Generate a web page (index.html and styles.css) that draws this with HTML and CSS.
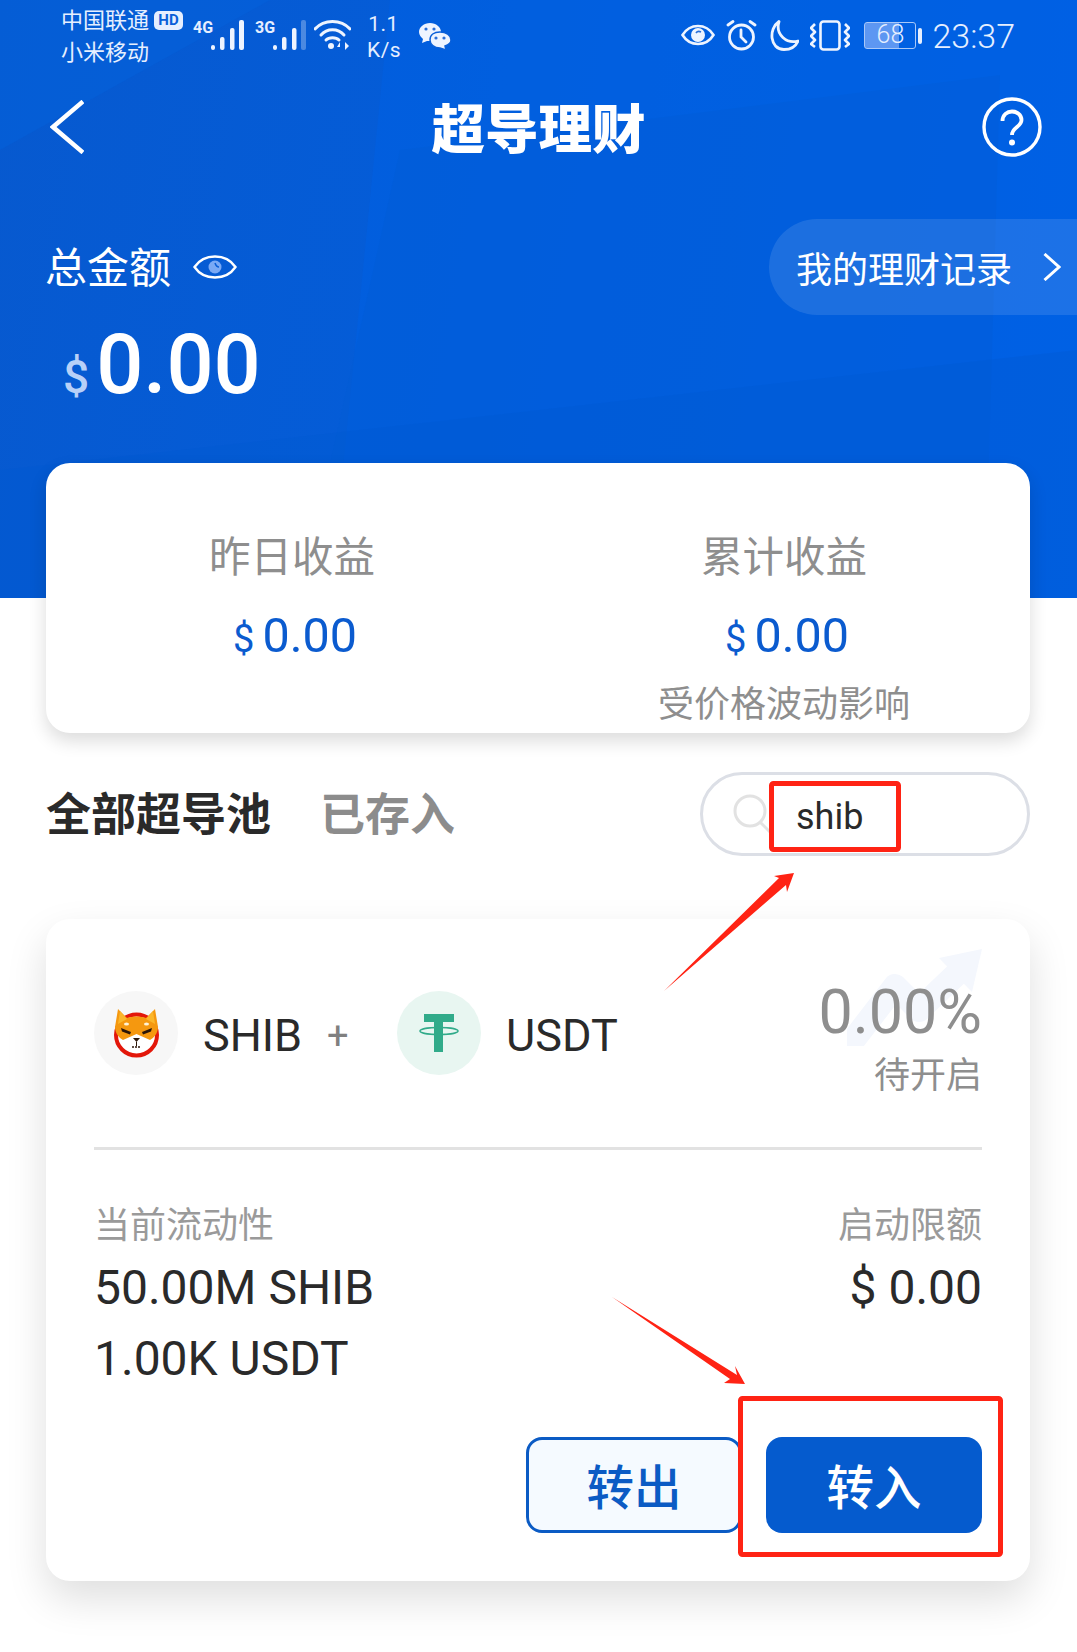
FILE: index.html
```html
<!DOCTYPE html>
<html lang="zh-CN">
    <head>
        <meta charset="UTF-8">
        <meta name="viewport" content="width=device-width, initial-scale=1.0">
        <title>超导理财</title>

        <link rel="stylesheet" href="styles.css">
    </head>
    <body>
        <div class="page">

            <div class="hero">
                <svg class="hero-bg" width="1077" height="598" viewBox="0 0 1077 598">
                    <polygon points="0,150 270,0 0,0" fill="#0461dc" opacity=".5"/>
                    <polygon points="390,0 1077,0 1077,598 330,598" fill="#0061e4" opacity=".55"/>
                    <polygon points="400,150 1000,75 985,598 300,598" fill="#045bd4" opacity=".35"/>
                    <polygon points="0,470 1077,350 1077,598 0,598" fill="#0058d0" opacity=".35"/>
                </svg>

                <!-- barra de status -->
                <div class="status">
                    <div class="status-left">
                        <div class="carrier">
                            <div>中国联通<span class="hd">HD</span></div>
                            <div>小米移动</div>
                        </div>
                        <div class="signal">
                            <span class="net">4G</span>
                            <svg width="33" height="30" viewBox="0 0 33 30" fill="#eef4ff">
                                <rect x="0" y="25" width="4" height="5" rx="2"/>
                                <rect x="9" y="17" width="4.500" height="13" rx="2"/>
                                <rect x="19" y="8" width="4.500" height="22" rx="2"/>
                                <rect x="28" y="0" width="5" height="30" rx="2"/>
                            </svg>
                        </div>
                        <div class="signal signal-3g">
                            <span class="net">3G</span>
                            <svg width="33" height="30" viewBox="0 0 33 30" fill="#eef4ff">
                                <rect x="0" y="25" width="4" height="5" rx="2"/>
                                <rect x="9" y="17" width="4.500" height="13" rx="2"/>
                                <rect x="19" y="8" width="4.500" height="22" rx="2"/>
                                <rect x="28" y="0" width="5" height="30" rx="2" opacity=".3"/>
                            </svg>
                        </div>
                        <svg class="wifi" width="37" height="30" viewBox="0 0 37 30" fill="none" stroke="#eef4ff" stroke-width="3" stroke-linecap="round">
                            <path d="M1 9C10 -1 27 -1 36 9"/>
                            <path d="M7 15C13 8 24 8 30 15"/>
                            <path d="M12 20C15 17 22 17 25 20"/>
                            <circle cx="17" cy="26" r="3" fill="#eef4ff" stroke="none"/>
                            <path d="M26 22L23 27H26V22ZM31 22V30L35 26Z" fill="#eef4ff" stroke="none"/>
                        </svg>
                        <div class="speed">
                            <div>1.1</div>
                            <div>K/s</div>
                        </div>
                        <svg class="wechat" width="32" height="27" viewBox="0 0 32 27">
                            <path d="M11 0C5 0 0 4 0 9C0 12 2 14 4 16L3 20L8 18C9 18 10 18 12 18C17 18 22 14 22 9C22 4 17 0 11 0Z" fill="#eef4ff"/>
                            <path d="M21 9C15 9 11 12 11 17C11 21 15 25 21 25L27 27L26 23C29 22 32 20 32 17C32 12 27 9 21 9Z" fill="#eef4ff" stroke="#0a5fd8" stroke-width="1.5"/>
                            <circle cx="7" cy="6" r="1.6" fill="#2a6fd8"/>
                            <circle cx="15" cy="6" r="1.6" fill="#2a6fd8"/>
                            <circle cx="17" cy="15" r="1.6" fill="#2a6fd8"/>
                            <circle cx="25" cy="15" r="1.6" fill="#2a6fd8"/>
                        </svg>
                    </div>
                    <div class="status-right">
                        <svg width="34" height="26" viewBox="0 0 34 26" fill="none" stroke="#eef4ff" stroke-width="2.6">
                            <path d="M1.5 13C9 1 25 1 32.5 13C25 25 9 25 1.5 13Z"/>
                            <circle cx="17" cy="13" r="7" fill="#eef4ff" stroke="none"/>
                            <path d="M15 11C16 9.500 18 9 20 10" stroke="#2a6fd8" stroke-width="1.6"/>
                        </svg>
                        <svg width="31" height="31" viewBox="0 0 31 31" fill="none" stroke="#eef4ff" stroke-width="2.8" stroke-linecap="round">
                            <circle cx="15.500" cy="17" r="12"/>
                            <path d="M15 10V17L20 22"/>
                            <path d="M2 5L7 1.500M29 5L24 1.500"/>
                        </svg>
                        <svg width="31" height="31" viewBox="0 0 31 31" fill="none" stroke="#eef4ff" stroke-width="2.8" stroke-linejoin="round">
                            <path d="M11 1.500C0 9 2 29.500 16 29.500C23 29.500 28 26 30 21C19 24 7 15 11 1.500Z"/>
                        </svg>
                        <svg width="40" height="31" viewBox="0 0 40 31" fill="none" stroke="#eef4ff" stroke-width="2.6" stroke-linejoin="round">
                            <rect x="10.500" y="1.500" width="19" height="28" rx="3"/>
                            <path d="M5 4L1 8L5 12L1 16L5 20L1 24L5 27"/>
                            <path d="M35 4L39 8L35 12L39 16L35 20L39 24L35 27"/>
                        </svg>
                        <div class="battery">
                            <div class="battery-body">68</div>
                            <div class="battery-nub"></div>
                        </div>
                        <div class="clock">23:37</div>
                    </div>
                </div>

                <div class="nav">
                    <svg class="back" width="34" height="54" viewBox="0 0 34 54" fill="none" stroke="#fff" stroke-width="4.500">
                        <path d="M33 1.500L3 27L33 52.500"/>
                    </svg>
                    <h1 class="title">超导理财</h1>
                    <svg class="help" width="60" height="60" viewBox="0 0 60 60" fill="none" stroke="#fff" stroke-width="3.400">
                        <circle cx="30" cy="30" r="28"/>
                        <path d="M20.500 24C20.500 11 39.500 12 39.500 23C39.500 30 30 30 30 38" stroke-width="3.800"/>
                        <circle cx="30" cy="45.500" r="3" fill="#fff" stroke="none"/>
                    </svg>
                </div>

                <div class="total-row">
                    <div class="total-label">
                        <span>总金额</span>
                        <svg width="44" height="26" viewBox="0 0 44 26" fill="none" stroke="#fff" stroke-width="2.400">
                            <path d="M1.500 13C11 -1 33 -1 42.500 13C33 27 11 27 1.500 13Z"/>
                            <circle cx="22" cy="13" r="6.500" fill="#7aa9f5" stroke="none"/>
                            <path d="M22 9C23 12 24 13 26 13" stroke="#0a5fd8" stroke-width="1.500"/>
                        </svg>
                    </div>
                    <div class="records">
                        <span>我的理财记录</span>
                        <svg width="18" height="28" viewBox="0 0 18 28" fill="none" stroke="#fff" stroke-width="3">
                            <path d="M1.500 1L16 14L1.500 27"/>
                        </svg>
                    </div>
                </div>

                <div class="total-amount"><span class="cur">$</span><span class="num">0.00</span></div>
            </div>

            <div class="summary">
                <div class="summary-col">
                    <div class="summary-label">昨日收益</div>
                    <div class="summary-value"><span class="cur">$</span>0.00</div>
                </div>
                <div class="summary-col">
                    <div class="summary-label">累计收益</div>
                    <div class="summary-value"><span class="cur">$</span>0.00</div>
                    <div class="summary-note">受价格波动影响</div>
                </div>
            </div>

            <div class="tabs">
                <div class="tab tab-active">全部超导池</div>
                <div class="tab">已存入</div>
                <div class="search">
                    <svg width="40" height="46" viewBox="0 0 40 46" fill="none" stroke="#e2e2e2" stroke-width="3">
                        <circle cx="17" cy="17" r="15"/>
                        <path d="M27 28L38 39"/>
                    </svg>
                    <span class="search-text">shib</span>
                </div>
            </div>

            <div class="pool">
                <svg class="pool-arrow" width="136" height="98" viewBox="0 0 136 98">
                    <path d="M8 90L48 38L72 62L118 18" fill="none" stroke="#f4f7fd" stroke-width="24" stroke-linecap="round" stroke-linejoin="round"/>
                    <path d="M92 10L135 1L125 44Z" fill="#f4f7fd"/>
                </svg>

                <div class="pool-top">
                    <div class="pair">
                        <div class="coin coin-shib">
                            <svg width="84" height="84" viewBox="0 0 84 84">
                                <circle cx="42.500" cy="44" r="20.500" fill="#fff" stroke="#e3170a" stroke-width="4"/>
                                <path d="M24 18L33 27C38 25 47 25 52 27L61 18L64 36C64 42 60 47 56 49L42.500 43L29 49C25 47 21 42 21 36Z" fill="#f5980f"/>
                                <path d="M26 20L33 28L24 33ZM59 20L52 28L61 33Z" fill="#fbb62a"/>
                                <ellipse cx="32.500" cy="33" rx="2.500" ry="1.500" fill="#fff3d6"/>
                                <ellipse cx="52.500" cy="33" rx="2.500" ry="1.500" fill="#fff3d6"/>
                                <path d="M27 37L37 41L36 43.500L28 40.500ZM58 37L48 41L49 43.500L57 40.500Z" fill="#2b1608"/>
                                <path d="M39 47H46L42.500 51Z" fill="#2b1608"/>
                                <path d="M38 56H47" stroke="#2b1608" stroke-width="1.500" stroke-dasharray="2 1"/>
                                <path d="M42.500 51V55" stroke="#2b1608" stroke-width="1"/>
                            </svg>
                        </div>
                        <span class="coin-name">SHIB</span>
                        <span class="plus">+</span>
                        <div class="coin coin-usdt">
                            <svg width="84" height="84" viewBox="0 0 84 84" fill="#31ab8a">
                                <rect x="27" y="23" width="30" height="8"/>
                                <rect x="37" y="23" width="9" height="38"/>
                                <ellipse cx="42" cy="40" rx="19" ry="3.500" fill="none" stroke="#31ab8a" stroke-width="1.500"/>
                            </svg>
                        </div>
                        <span class="coin-name">USDT</span>
                    </div>
                    <div class="rate">
                        <div class="rate-value">0.00%</div>
                        <div class="rate-note">待开启</div>
                    </div>
                </div>

                <div class="divider"></div>

                <div class="stats">
                    <div>
                        <div class="stat-label">当前流动性</div>
                        <div class="stat-value">50.00M SHIB</div>
                        <div class="stat-value">1.00K USDT</div>
                    </div>
                    <div class="stat-right">
                        <div class="stat-label">启动限额</div>
                        <div class="stat-value">$ 0.00</div>
                    </div>
                </div>

                <div class="actions">
                    <div class="btn btn-out">转出</div>
                    <div class="btn btn-in">转入</div>
                </div>
            </div>

            <!-- marcacoes em vermelho por cima da tela -->
            <svg class="marks" width="1077" height="1652" viewBox="0 0 1077 1652">
                <rect x="771.500" y="783.500" width="127" height="66" rx="2" fill="none" stroke="#ff2314" stroke-width="5"/>
                <rect x="740.500" y="1398.500" width="260" height="156" rx="2" fill="none" stroke="#ff2314" stroke-width="5"/>
                <polygon points="664,991 779,878 774,876 794,873 787,892 786,885" fill="#ff2314"/>
                <polygon points="612,1297 737,1375 735,1366 745,1384 724,1383 730,1379" fill="#ff2314"/>
            </svg>

        </div>
    </body>
</html>
```

FILE: styles.css
```css
*{
    box-sizing: border-box;
}
body{
    margin: 0;
    background-color: #fff;
    font-family: Roboto, "Noto Sans CJK SC", sans-serif;
}
.page{
    position: relative;
    width: 1077px;
    height: 1652px;
    overflow: hidden;
    background-color: #fff;
}
.hero{
    position: relative;
    height: 598px;
    overflow: hidden;
    color: #fff;
    background: linear-gradient(100deg, #0759cf, #0062e6);
}
.hero-bg{
    position: absolute;
    left: 0;
    top: 0;
}
.status, .nav, .total-row, .total-amount{
    position: relative;
}

/* status */
.status{
    display: flex;
    justify-content: space-between;
    height: 74px;
    padding: 0 62px 0 61px;
    color: #e6efff;
}
.status-left{
    display: flex;
    align-items: flex-start;
}
.carrier{
    width: 122px;
    padding-top: 5px;
    font-size: 22px;
    line-height: 32px;
}
.hd{
    display: inline-block;
    vertical-align: 3px;
    width: 29px;
    height: 19px;
    margin-left: 5px;
    border-radius: 5px;
    background-color: #e6efff;
    color: #0a5fd8;
    font-size: 15px;
    font-weight: 700;
    line-height: 19px;
    text-align: center;
}
.signal{
    display: flex;
    align-items: flex-start;
    margin: 20px 0 0 10px;
}
.signal-3g{
    margin-left: 11px;
}
.net{
    width: 18px;
    font-family: "Liberation Sans Narrow", Roboto, sans-serif;
    font-size: 16px;
    font-weight: 700;
    line-height: 16px;
}
.wifi{
    margin: 20px 0 0 8px;
}
.speed{
    width: 33px;
    margin: 11px 0 0 16px;
    font-size: 21px;
    line-height: 26px;
    text-align: center;
    letter-spacing: 0.500px;
}
.wechat{
    margin: 23px 0 0 19px;
}
.status-right{
    display: flex;
    align-items: flex-start;
    gap: 11px;
    padding-top: 20px;
}
.status-right svg:first-child{
    margin-top: 2px;
}
.battery{
    display: flex;
    align-items: center;
    gap: 2px;
    margin: 2px 0 0 3px;
}
.battery-body{
    width: 52px;
    height: 27px;
    border: 1.500px solid #a9c8f8;
    border-radius: 3px;
    background: linear-gradient(90deg, #5d97f2 68%, transparent 68%);
    font-size: 25px;
    font-weight: 300;
    line-height: 24px;
    text-align: center;
}
.battery-nub{
    width: 4px;
    height: 16px;
    border-radius: 2px;
    background-color: #e6efff;
}
.clock{
    margin-left: -1px;
    font-size: 34px;
    font-weight: 300;
    line-height: 32px;
}

/* nav */
.nav{
    display: grid;
    grid-template-columns: 1fr auto 1fr;
    align-items: center;
    height: 106px;
    padding: 0 35px;
}
.back{
    margin-left: 15px;
}
.title{
    margin: 0;
    padding-top: 8px;
    font-size: 53.500px;
    font-weight: 900;
    line-height: 98px;
}
.help{
    justify-self: end;
}

/* total */
.total-row{
    display: flex;
    justify-content: space-between;
    align-items: center;
    height: 96px;
    margin-top: 39px;
    padding-left: 45px;
}
.total-label{
    display: flex;
    align-items: center;
    gap: 22px;
    font-size: 42px;
    line-height: 92px;
}
.total-label span{
    padding-top: 4px;
}
.records{
    display: flex;
    align-items: center;
    width: 308px;
    height: 96px;
    padding-left: 27px;
    border-radius: 48px 0 0 48px;
    background-color: rgba(255, 255, 255, .11);
    font-size: 36px;
}
.records svg{
    margin-left: 31px;
}
.total-amount{
    display: flex;
    align-items: baseline;
    padding-left: 63px;
}
.total-amount .cur{
    color: #b8d0f8;
    font-size: 46px;
    font-weight: 500;
    margin-right: 7px;
}
.num{
    font-size: 83px;
    font-weight: 500;
    line-height: 100px;
}

/* cards */
.summary, .pool{
    position: relative;
    margin: 0 47px 0 46px;
    border-radius: 24px;
    background-color: #fff;
}
.summary{
    display: grid;
    grid-template-columns: 1fr 1fr;
    height: 270px;
    margin-top: -135px;
    padding-top: 67px;
    box-shadow: 0 8px 18px rgba(0, 0, 0, .14);
    text-align: center;
}
.summary-label{
    color: #8e8e8e;
    font-size: 41.500px;
    line-height: 56px;
}
.summary-value{
    margin-top: 20px;
    padding-left: 6px;
    color: #0b5bcf;
    font-size: 48.500px;
    line-height: 60px;
}
.summary-value .cur{
    margin-right: 8px;
    font-size: 38px;
}
.summary-note{
    margin-top: 14px;
    color: #8e8e8e;
    font-size: 36px;
    line-height: 44px;
}

/* tabs */
.tabs{
    display: flex;
    align-items: center;
    height: 84px;
    margin: 39px 47px 0 46px;
}
.tab{
    margin: 0 49px 6px 0;
    color: #8c8c8c;
    font-size: 45px;
    font-weight: 700;
}
.tab-active{
    color: #2a2a2a;
}
.search{
    display: flex;
    align-items: center;
    width: 330px;
    height: 84px;
    margin-left: auto;
    padding-left: 30px;
    border: 3px solid #dcdfe6;
    border-radius: 42px;
}
.search svg{
    margin-top: 6px;
}
.search-text{
    margin: 6px 0 0 23px;
    color: #2a2a2a;
    font-size: 36px;
}

/* pool */
.pool{
    height: 662px;
    margin-top: 63px;
    padding: 51px 48px 48px;
    box-shadow: 0 18px 40px rgba(0, 0, 0, .13);
}
.pool-arrow{
    position: absolute;
    right: 47px;
    top: 29px;
}
.pool-top{
    position: relative;
    display: flex;
    justify-content: space-between;
    height: 177px;
}
.pair{
    display: flex;
    align-items: center;
    height: 84px;
    margin-top: 21px;
}
.coin{
    width: 84px;
    height: 84px;
    border-radius: 50%;
}
.coin-shib{
    background-color: #f7f7f7;
}
.coin-usdt{
    background-color: #e8f6f1;
}
.coin-name{
    margin: 4px 0 0 25px;
    color: #2a2a2a;
    font-size: 45px;
}
.plus{
    width: 25px;
    margin: 6px 45px 0 25px;
    color: #808080;
    font-size: 38px;
}
.rate{
    padding-top: 2px;
    text-align: right;
}
.rate-value{
    color: #8e8e8e;
    font-size: 61px;
    line-height: 80px;
}
.rate-note{
    color: #8e8e8e;
    font-size: 36px;
    line-height: 48px;
}
.divider{
    height: 3px;
    background-color: #e2e2e2;
}
.stats{
    display: flex;
    justify-content: space-between;
    margin-top: 51px;
}
.stat-right{
    text-align: right;
}
.stat-label{
    color: #9a9a9a;
    font-size: 36px;
    line-height: 50px;
}
.stat-value{
    margin-top: 1px;
    margin-bottom: -1px;
    color: #2a2a2a;
    font-size: 48px;
    line-height: 71px;
}
.actions{
    display: flex;
    justify-content: flex-end;
    gap: 24px;
    margin-top: 44px;
}
.btn{
    width: 216px;
    height: 96px;
    border-radius: 16px;
    font-size: 47.500px;
    font-weight: 500;
    line-height: 98px;
    text-align: center;
}
.btn-out{
    border: 3px solid #0b5bc4;
    background-color: #f5faff;
    color: #0b5bc4;
}
.btn-in{
    padding-top: 3px;
    background-color: #055bce;
    color: #fff;
}

.marks{
    position: absolute;
    left: 0;
    top: 0;
}
```
